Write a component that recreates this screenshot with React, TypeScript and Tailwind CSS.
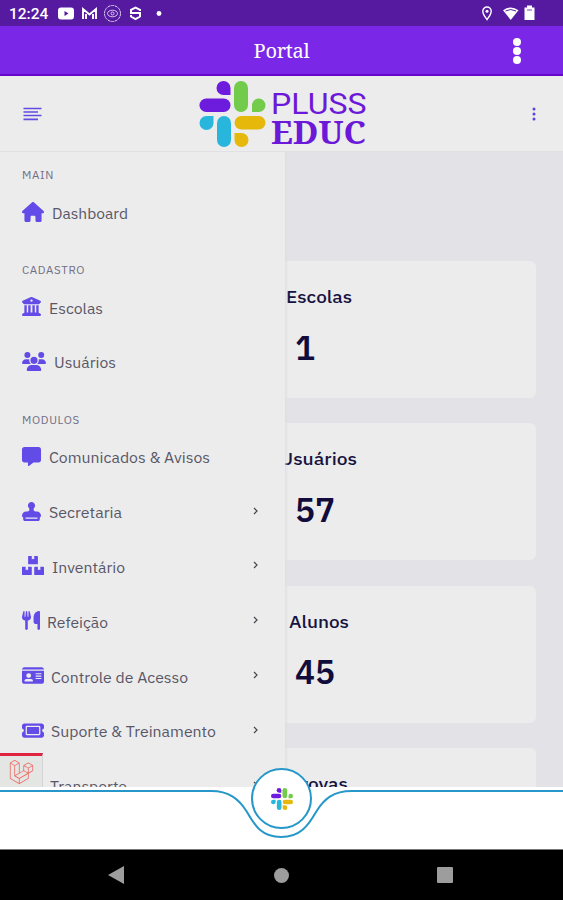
import type { ReactNode } from "react";
import type { IconType } from "react-icons";
import {
  FaHouse,
  FaBuildingColumns,
  FaUsers,
  FaMessage,
  FaStamp,
  FaUtensils,
  FaIdCard,
  FaTicket,
  FaLaravel,
} from "react-icons/fa6";
import { FaBoxes, FaTruck } from "react-icons/fa";

const sans = "font-['IBM_Plex_Sans','Noto_Sans',sans-serif]";

function LogoMark({ className }: { className: string }) {
  return (
    <svg viewBox="0 0 66 66" className={className}>
      <g fill="#6d1bdc">
        <path d="M31 14V7a7 7 0 1 0-7 7z" />
        <rect x="0" y="17.500" width="31" height="13.500" rx="6.750" />
      </g>
      <g fill="#72cb4b">
        <rect x="34.500" y="0" width="14" height="31" rx="7" />
        <path d="M52.500 31v-6.500a6.750 6.750 0 1 1 6.750 6.500z" />
      </g>
      <g fill="#29b6dc">
        <path d="M14 35v7a7 7 0 1 1-7-7z" />
        <rect x="17.500" y="35" width="14" height="31" rx="7" />
      </g>
      <g fill="#e6b80c">
        <rect x="35" y="35" width="31" height="13.500" rx="6.750" />
        <path d="M35 52h7a7 7 0 1 1-7 7z" />
      </g>
    </svg>
  );
}

function StatusBar() {
  return (
    <div className="flex h-[26px] shrink-0 items-center bg-[#551aa0] pl-[9px] text-white">
      <span className="w-[49px] pt-[3px] font-[Roboto,sans-serif] text-[15.500px] font-medium leading-none">12:24</span>
      <svg width="106" height="20" viewBox="0 0 106 20" fill="none">
        <rect x="0" y="4.500" width="16" height="12" rx="3" fill="white" />
        <path d="M6.500 8v5l4-2.500z" fill="#551aa0" />
        <path d="M25 16V6l6.500 5.500L38 6v10M28 16v-5M35 16v-5" stroke="white" strokeWidth="1.900" />
        <circle cx="54.500" cy="10.500" r="8" stroke="#ddcef0" strokeDasharray="3 .6" />
        <ellipse cx="54.500" cy="10.500" rx="5" ry="3.300" stroke="#ddcef0" />
        <circle cx="54.500" cy="10.500" r="1.500" stroke="#ddcef0" />
        <path d="M82 8V6.800L77.500 4.500l-4.500 2.300v3.200h9v3.500L77.500 16.200l-4.500-2.700V12" stroke="white" strokeWidth="2" />
        <circle cx="101" cy="10.500" r="2.400" fill="white" />
      </svg>
      <svg width="54" height="20" viewBox="0 0 54 20" fill="none" className="ml-auto mr-[27px]">
        <path d="M5 16.500C3.200 13.900.8 11.300.8 8.200a4.200 4.200 0 0 1 8.400 0c0 3.100-2.400 5.700-4.200 8.300z" stroke="white" strokeWidth="1.400" />
        <circle cx="5" cy="8.300" r="1.500" fill="white" />
        <path d="M21 7.300Q28.700 1.500 36.500 7.300L28.700 17z" fill="white" />
        <path d="M23.500 8q5.200-3 10.500 0" stroke="#551aa0" />
        <path d="M42.500 4.500h2.500V2.500h5v2h2.500V17h-10z" fill="white" />
        <path d="M45 7h5" stroke="#551aa0" strokeWidth=".8" />
      </svg>
    </div>
  );
}

function TitleBar() {
  return (
    <div className="grid h-[50px] shrink-0 grid-cols-3 items-center border-b-2 border-[#6507cb] bg-[#7b27e8] text-white">
      <h1 className="col-start-2 mt-[1px] text-center font-['Noto_Serif','DejaVu_Serif','Liberation_Serif',serif] text-[20px] leading-none tracking-[-0.3px]">Portal</h1>
      <div className="mr-[42px] mt-px flex flex-col items-center gap-px justify-self-end">
        <i className="size-2 rounded-full bg-white" />
        <i className="size-2 rounded-full bg-white" />
        <i className="size-2 rounded-full bg-white" />
      </div>
    </div>
  );
}

function Header() {
  return (
    <header className="flex h-[76px] shrink-0 items-start border-b border-[#e1e1e3] bg-[#ececec]">
      <svg width="20" height="14" viewBox="0 0 20 14" className="ml-[23px] mt-[31px]" stroke="#624be0" strokeWidth="1.700">
        <path d="M.5 1.500h18M.5 5h14.500M.5 8.500h18M.5 12.300h14.500" />
      </svg>
      <div className="ml-[156px] mt-[5px] flex">
        <LogoMark className="h-[66px] w-[67px]" />
        <svg width="100" height="70" viewBox="0 0 100 70" className="ml-[5px] overflow-visible" fill="#6b18d8">
          <text x="0" y="33" textLength="95.500" lengthAdjust="spacingAndGlyphs" fontFamily="Roboto, sans-serif" fontSize="30">PLUSS</text>
          <text x="0" y="62.500" textLength="95" lengthAdjust="spacingAndGlyphs" fontFamily="Noto Serif, Liberation Serif, serif" fontSize="32" fontWeight="700">EDUC</text>
        </svg>
      </div>
      <svg width="4" height="14" viewBox="0 0 4 14" className="ml-auto mr-[27px] mt-[31px]" fill="#5a42dc">
        <circle cx="2" cy="2" r="1.500" />
        <circle cx="2" cy="7" r="1.500" />
        <circle cx="2" cy="12" r="1.500" />
      </svg>
    </header>
  );
}

type Item = { label: string; icon: IconType; iconClass: string; textClass: string; more?: boolean };

const cadastro: Item[] = [
  { label: "Escolas", icon: FaBuildingColumns, iconClass: "h-[19px] w-[19px]", textClass: "ml-2 w-[54px]" },
  { label: "Usuários", icon: FaUsers, iconClass: "h-[19px] w-6", textClass: "ml-2 w-[62px]" },
];

const modulos: Item[] = [
  { label: "Comunicados & Avisos", icon: FaMessage, iconClass: "h-[19px] w-[19px]", textClass: "ml-2 w-[161px]" },
  { label: "Secretaria", icon: FaStamp, iconClass: "h-[19px] w-[19px]", textClass: "ml-2 w-[73px]", more: true },
  { label: "Inventário", icon: FaBoxes, iconClass: "h-[19px] w-[22px]", textClass: "ml-[7.500px] w-[73px]", more: true },
  { label: "Refeição", icon: FaUtensils, iconClass: "h-[19px] w-[18px]", textClass: "ml-[7px] w-[61px]", more: true },
  { label: "Controle de Acesso", icon: FaIdCard, iconClass: "h-[19px] w-[22px]", textClass: "ml-[7px] w-[137px]", more: true },
  { label: "Suporte & Treinamento", icon: FaTicket, iconClass: "h-[19px] w-[22px]", textClass: "ml-[7px] w-[165px]", more: true },
  { label: "Transporte", icon: FaTruck, iconClass: "h-[19px] w-[19px]", textClass: "ml-[9px] w-[77px]", more: true },
];

function MenuRow({ item }: { item: Item }) {
  const Icon = item.icon;
  return (
    <li className="flex h-[54.850px] items-center pl-[22px] pr-[27px]">
      <Icon preserveAspectRatio="none" className={`mb-[2px] shrink-0 text-[#624be7] ${item.iconClass}`} />
      <span className={item.textClass}>
        <svg width="100%" height="24" className="block overflow-visible" fill="#595767">
          <text x="0" y="17.500" fontSize="15.500" textLength={item.textClass.match(/w-\[(\d+)px\]/)?.[1]} lengthAdjust="spacingAndGlyphs">{item.label}</text>
        </svg>
      </span>
      {item.more && (
        <svg width="5" height="8" viewBox="0 0 5 8" className="mb-[3px] ml-auto" fill="none" stroke="#44424f" strokeWidth="1.200">
          <path d="m1 1 3 3-3 3" />
        </svg>
      )}
    </li>
  );
}

function SectionTitle({ children }: { children: ReactNode }) {
  return <h2 className="flex h-10 items-end pl-[22px] text-[11.500px] leading-5 tracking-[0.650px] text-[#716e86]">{children}</h2>;
}

function Sidebar() {
  return (
    <nav className="absolute left-0 top-0 h-full w-[285px] overflow-hidden bg-[#ececec] shadow-[1px_0_3px_#dcdce1]">
      <div className="-mt-[6.700px]">
        <SectionTitle>MAIN</SectionTitle>
        <ul>
          <MenuRow item={{ label: "Dashboard", icon: FaHouse, iconClass: "h-[20px] w-[22px]", textClass: "ml-[7.500px] w-[76px]" }} />
        </ul>
        <SectionTitle>CADASTRO</SectionTitle>
        <ul>{cadastro.map((item) => <MenuRow key={item.label} item={item} />)}</ul>
        <SectionTitle>MODULOS</SectionTitle>
        <ul>{modulos.map((item) => <MenuRow key={item.label} item={item} />)}</ul>
      </div>
    </nav>
  );
}

const stats = [
  { label: "Escolas", value: "1", pad: "pl-[259px]", width: 66 },
  { label: "Usuários", value: "57", pad: "pl-[253px]", width: 77 },
  { label: "Alunos", value: "45", pad: "pl-[262px]", width: 60 },
  { label: "Provas", pad: "pl-[262px]", width: 59 },
];

function Cards() {
  return (
    <main className="flex flex-col gap-[25.300px] bg-[#e2e2e7] pl-[27px] pr-[27px] pt-[109px]">
      {stats.map((s) => (
        <section key={s.label} className="h-[137px] shrink-0 rounded-md bg-[#ececec] pt-[25px]">
          <div className={s.pad}>
            <svg width={s.width} height="24" className="block overflow-visible" fill="#17133f">
              <text x="0" y="17.300" fontSize="17" fontWeight="500" textLength={s.width} lengthAdjust="spacingAndGlyphs">{s.label}</text>
            </svg>
          </div>
          {s.value && (
            <p className="mt-[14.500px] pl-[268px] text-[33.500px] font-semibold leading-[46px] text-[#110c3b]">{s.value}</p>
          )}
        </section>
      ))}
    </main>
  );
}

function BottomBar() {
  return (
    <footer className="relative h-[63px] shrink-0 border-b border-[#777] bg-white">
      <svg width="563" height="54" viewBox="0 0 563 54" className="block" fill="none" stroke="#2697ca" strokeWidth="2">
        <path d="M0 4h211c18 0 28 8 36 21 8 14 15 25 34 25s27-11 35-25c8-13 17-21 36-21h211" />
      </svg>
      <button className="absolute -top-[19px] left-[251px] flex size-[61px] items-center justify-center rounded-full border-2 border-[#2697ca] bg-white">
        <LogoMark className="size-[22px]" />
      </button>
    </footer>
  );
}

function SystemNav() {
  return (
    <div className="flex h-[50px] shrink-0 items-center justify-between bg-black pl-[108px] pr-[110px]">
      <svg width="16" height="18" viewBox="0 0 16 18" fill="#9d9d9d"><path d="M0 9 16 0v18z" /></svg>
      <i className="ml-[2px] size-[15px] rounded-full bg-[#9d9d9d]" />
      <i className="size-[16px] rounded-[1px] bg-[#9d9d9d]" />
    </div>
  );
}

export default function App() {
  return (
    <div className={`flex h-[900px] w-[563px] flex-col overflow-hidden bg-[#e2e2e7] ${sans}`}>
      <StatusBar />
      <TitleBar />
      <Header />
      <div className="relative h-[635px] shrink-0 overflow-hidden">
        <Cards />
        <Sidebar />
        <div className="absolute bottom-0 left-0 flex h-[34px] w-[43px] justify-center border-r border-t-[3px] border-r-[#d5d5d7] border-t-[#df2441] bg-[#e4e6e4] pt-1">
          <FaLaravel className="h-6 w-[25px] text-[#ef625a]" />
        </div>
      </div>
      <BottomBar />
      <SystemNav />
    </div>
  );
}
